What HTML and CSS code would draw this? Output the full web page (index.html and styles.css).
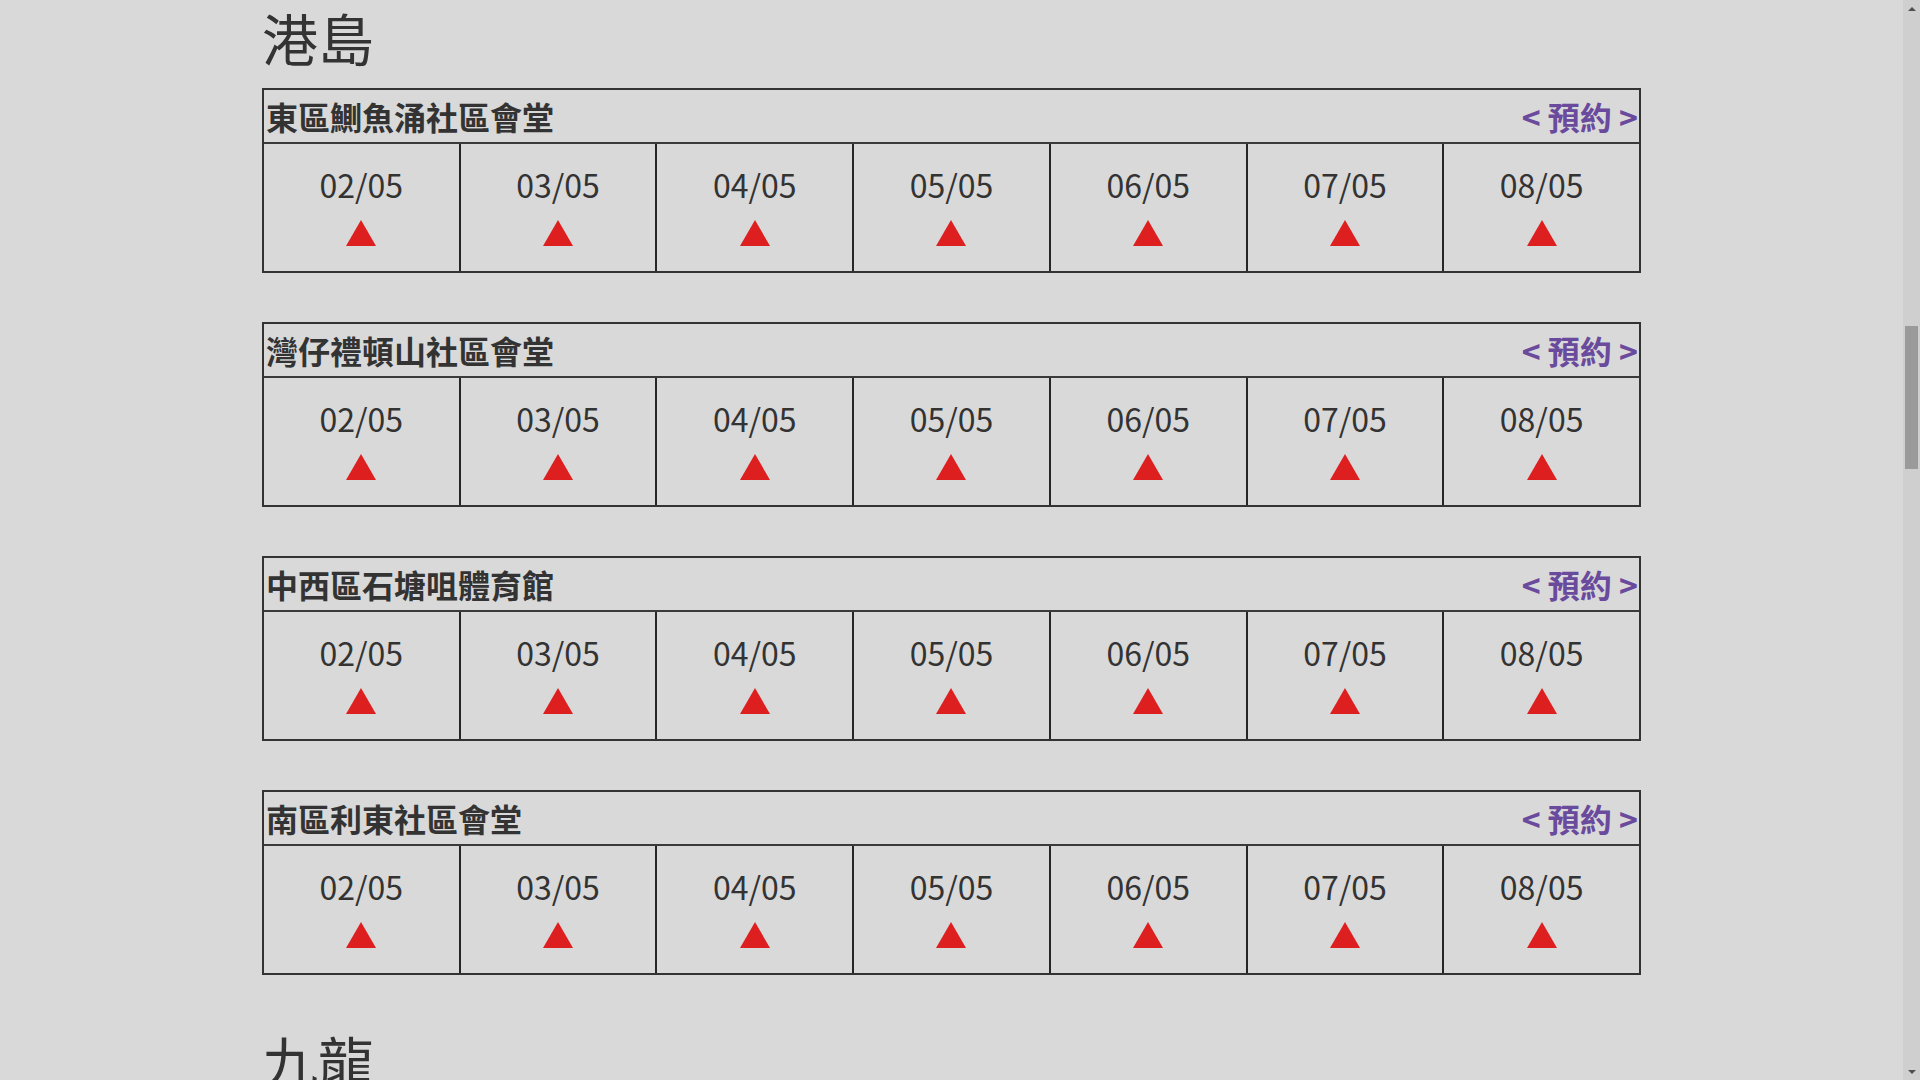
FILE: index.html
```html
<!DOCTYPE html>
<html lang="zh-Hant">
<head>
<meta charset="utf-8">
<title>港島</title>
<link rel="stylesheet" href="styles.css">
</head>
<body>
<div class="page">
  <div class="wrap">
    <h2 class="region">港島</h2>

    <section class="venue">
      <div class="venue-head"><span class="venue-name">東區鰂魚涌社區會堂</span><a class="book">&lt; 預約 &gt;</a></div>
      <div class="days">
        <div class="day"><div class="date">02/05</div><svg class="tri" viewBox="0 0 30 26"><polygon points="0,26 15,0 30,26"/></svg></div>
        <div class="day"><div class="date">03/05</div><svg class="tri" viewBox="0 0 30 26"><polygon points="0,26 15,0 30,26"/></svg></div>
        <div class="day"><div class="date">04/05</div><svg class="tri" viewBox="0 0 30 26"><polygon points="0,26 15,0 30,26"/></svg></div>
        <div class="day"><div class="date">05/05</div><svg class="tri" viewBox="0 0 30 26"><polygon points="0,26 15,0 30,26"/></svg></div>
        <div class="day"><div class="date">06/05</div><svg class="tri" viewBox="0 0 30 26"><polygon points="0,26 15,0 30,26"/></svg></div>
        <div class="day"><div class="date">07/05</div><svg class="tri" viewBox="0 0 30 26"><polygon points="0,26 15,0 30,26"/></svg></div>
        <div class="day"><div class="date">08/05</div><svg class="tri" viewBox="0 0 30 26"><polygon points="0,26 15,0 30,26"/></svg></div>
      </div>
    </section>

    <section class="venue">
      <div class="venue-head"><span class="venue-name">灣仔禮頓山社區會堂</span><a class="book">&lt; 預約 &gt;</a></div>
      <div class="days">
        <div class="day"><div class="date">02/05</div><svg class="tri" viewBox="0 0 30 26"><polygon points="0,26 15,0 30,26"/></svg></div>
        <div class="day"><div class="date">03/05</div><svg class="tri" viewBox="0 0 30 26"><polygon points="0,26 15,0 30,26"/></svg></div>
        <div class="day"><div class="date">04/05</div><svg class="tri" viewBox="0 0 30 26"><polygon points="0,26 15,0 30,26"/></svg></div>
        <div class="day"><div class="date">05/05</div><svg class="tri" viewBox="0 0 30 26"><polygon points="0,26 15,0 30,26"/></svg></div>
        <div class="day"><div class="date">06/05</div><svg class="tri" viewBox="0 0 30 26"><polygon points="0,26 15,0 30,26"/></svg></div>
        <div class="day"><div class="date">07/05</div><svg class="tri" viewBox="0 0 30 26"><polygon points="0,26 15,0 30,26"/></svg></div>
        <div class="day"><div class="date">08/05</div><svg class="tri" viewBox="0 0 30 26"><polygon points="0,26 15,0 30,26"/></svg></div>
      </div>
    </section>

    <section class="venue">
      <div class="venue-head"><span class="venue-name">中西區石塘咀體育館</span><a class="book">&lt; 預約 &gt;</a></div>
      <div class="days">
        <div class="day"><div class="date">02/05</div><svg class="tri" viewBox="0 0 30 26"><polygon points="0,26 15,0 30,26"/></svg></div>
        <div class="day"><div class="date">03/05</div><svg class="tri" viewBox="0 0 30 26"><polygon points="0,26 15,0 30,26"/></svg></div>
        <div class="day"><div class="date">04/05</div><svg class="tri" viewBox="0 0 30 26"><polygon points="0,26 15,0 30,26"/></svg></div>
        <div class="day"><div class="date">05/05</div><svg class="tri" viewBox="0 0 30 26"><polygon points="0,26 15,0 30,26"/></svg></div>
        <div class="day"><div class="date">06/05</div><svg class="tri" viewBox="0 0 30 26"><polygon points="0,26 15,0 30,26"/></svg></div>
        <div class="day"><div class="date">07/05</div><svg class="tri" viewBox="0 0 30 26"><polygon points="0,26 15,0 30,26"/></svg></div>
        <div class="day"><div class="date">08/05</div><svg class="tri" viewBox="0 0 30 26"><polygon points="0,26 15,0 30,26"/></svg></div>
      </div>
    </section>

    <section class="venue">
      <div class="venue-head"><span class="venue-name">南區利東社區會堂</span><a class="book">&lt; 預約 &gt;</a></div>
      <div class="days">
        <div class="day"><div class="date">02/05</div><svg class="tri" viewBox="0 0 30 26"><polygon points="0,26 15,0 30,26"/></svg></div>
        <div class="day"><div class="date">03/05</div><svg class="tri" viewBox="0 0 30 26"><polygon points="0,26 15,0 30,26"/></svg></div>
        <div class="day"><div class="date">04/05</div><svg class="tri" viewBox="0 0 30 26"><polygon points="0,26 15,0 30,26"/></svg></div>
        <div class="day"><div class="date">05/05</div><svg class="tri" viewBox="0 0 30 26"><polygon points="0,26 15,0 30,26"/></svg></div>
        <div class="day"><div class="date">06/05</div><svg class="tri" viewBox="0 0 30 26"><polygon points="0,26 15,0 30,26"/></svg></div>
        <div class="day"><div class="date">07/05</div><svg class="tri" viewBox="0 0 30 26"><polygon points="0,26 15,0 30,26"/></svg></div>
        <div class="day"><div class="date">08/05</div><svg class="tri" viewBox="0 0 30 26"><polygon points="0,26 15,0 30,26"/></svg></div>
      </div>
    </section>

    <h2 class="region region-next">九龍</h2>
  </div>
</div>
<div class="scrollbar">
  <div class="sb-btn"><span class="sb-up"></span></div>
  <div class="sb-track"><div class="sb-thumb"></div></div>
  <div class="sb-btn"><span class="sb-down"></span></div>
</div>
</body>
</html>
```

FILE: styles.css
```css
html, body {
  margin: 0;
  height: 100%;
  overflow: hidden;
}
body {
  display: flex;
  background: #d9d9d9;
  font-family: "Noto Sans CJK TC", "Noto Sans", sans-serif;
  color: #333;
}
.page {
  flex: 1;
  overflow: hidden;
  padding-top: 3px;
}
.wrap {
  width: 1379px;
  margin: 0 auto;
}
.region {
  margin: 0 0 18px;
  font-size: 56px;
  font-weight: 400;
  line-height: 67px;
  color: #333;
}
.region-next {
  margin-top: 51px;
}
.venue {
  border: 2px solid #333;
  margin-bottom: 49px;
}
.venue-head {
  display: flex;
  justify-content: space-between;
  align-items: center;
  height: 52px;
  line-height: 52px;
  padding: 0 1px 0 2px;
  border-bottom: 2px solid #3a3a3a;
  font-size: 32px;
  font-weight: 700;
}
.venue-name {
  color: #333;
}
.book {
  color: #6a4a9c;
  text-decoration: none;
}
.days {
  display: grid;
  grid-template-columns: repeat(7, 1fr);
  column-gap: 2px;
  background: #262626;
}
.day {
  background: #d9d9d9;
  display: flex;
  flex-direction: column;
  align-items: center;
  padding: 20px 0 25px;
}
.date {
  font-size: 32px;
  line-height: 40px;
  color: #333;
}
.tri {
  display: block;
  width: 30px;
  height: 26px;
  margin-top: 16px;
  fill: #dd1f1f;
}
.scrollbar {
  width: 17px;
  flex: none;
  background: #cfcfcf;
  display: flex;
  flex-direction: column;
}
.sb-btn {
  height: 17px;
  display: flex;
  align-items: center;
  justify-content: center;
}
.sb-up, .sb-down {
  width: 0;
  height: 0;
  border-left: 4px solid transparent;
  border-right: 4px solid transparent;
}
.sb-up {
  border-bottom: 4px solid #505050;
}
.sb-down {
  border-top: 4px solid #505050;
}
.sb-track {
  flex: 1;
}
.sb-thumb {
  margin: 309px 2px 0 2px;
  height: 143px;
  background: #9a9a9a;
}
```
